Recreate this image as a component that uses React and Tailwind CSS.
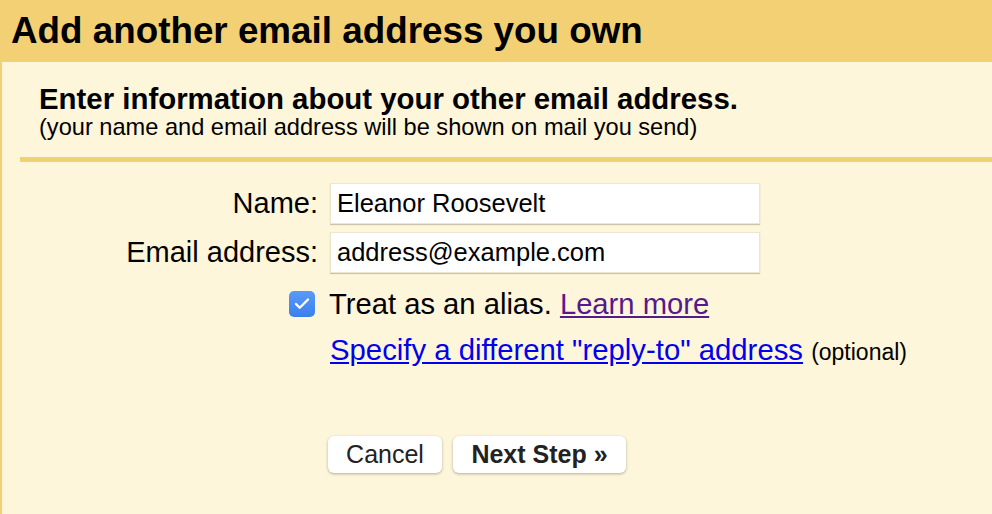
import { Check } from 'lucide-react';

const font = { fontFamily: '"Liberation Sans", Arial, sans-serif' };

function Field({ label, value }) {
  return (
    <>
      <label className="pr-[12px] text-right text-[29px] leading-[41px] text-black">{label}</label>
      <div className="h-[41px] w-[430px] border border-[#eee6cc] bg-white pl-[6px] text-[25.5px] leading-[39px] text-black shadow-[0_1px_1px_rgba(0,0,0,0.2)]">
        {value}
      </div>
    </>
  );
}

export default function App() {
  return (
    <div className="h-[514px] w-[992px] overflow-hidden bg-[#fef6da]" style={font}>
      <header className="h-[62px] bg-[#f3d073] pl-[11px] pt-[10px]">
        <h1 className="text-[36.8px] font-bold leading-[42px] text-black">Add another email address you own</h1>
      </header>

      <main className="h-[452px] border-l-2 border-[#f3d073]">
        <div className="pl-[37px] pt-[22px]">
          <h2 className="text-[29.4px] font-bold leading-[30px] text-black">
            Enter information about your other email address.
          </h2>
          <p className="text-[23.6px] leading-[26px] text-black">
            (your name and email address will be shown on mail you send)
          </p>
        </div>

        <div className="ml-[18px] mt-[17px] h-[5px] bg-[#f3d073]" />

        <div className="mt-[21px] grid grid-cols-[328px_430px] gap-y-[8px]">
          <Field label="Name:" value="Eleanor Roosevelt" />
          <Field label="Email address:" value="address@example.com" />
        </div>

        <div className="ml-[287px] mt-[15px] flex items-center gap-[14px]">
          <span className="flex h-[26px] w-[26px] items-center justify-center rounded-[5px] bg-gradient-to-b from-[#5a9af6] to-[#3a7fef]">
            <Check size={18} strokeWidth={3.2} className="text-white" />
          </span>
          <span className="text-[29.2px] leading-[32px] text-black">
            Treat as an alias.{' '}
            <a href="#learn" className="text-[#551a8b] underline">Learn more</a>
          </span>
        </div>

        <div className="ml-[328px] mt-[14px] text-[29.3px] leading-[32px]">
          <a href="#reply-to" className="text-[#0000ee] underline">Specify a different "reply-to" address</a>{' '}
          <span className="text-[23px] text-black">(optional)</span>
        </div>

        <div className="ml-[326px] mt-[68px] flex gap-[11px]">
          <button
            type="button"
            className="h-[37px] w-[114px] rounded-[6px] bg-white text-[25px] text-[#222] shadow-[0_1px_3px_rgba(0,0,0,0.3)]"
          >
            Cancel
          </button>
          <button
            type="button"
            className="h-[37px] w-[173px] rounded-[6px] bg-white text-[25px] font-bold text-[#222] shadow-[0_1px_3px_rgba(0,0,0,0.3)]"
          >
            Next Step »
          </button>
        </div>
      </main>
    </div>
  );
}
